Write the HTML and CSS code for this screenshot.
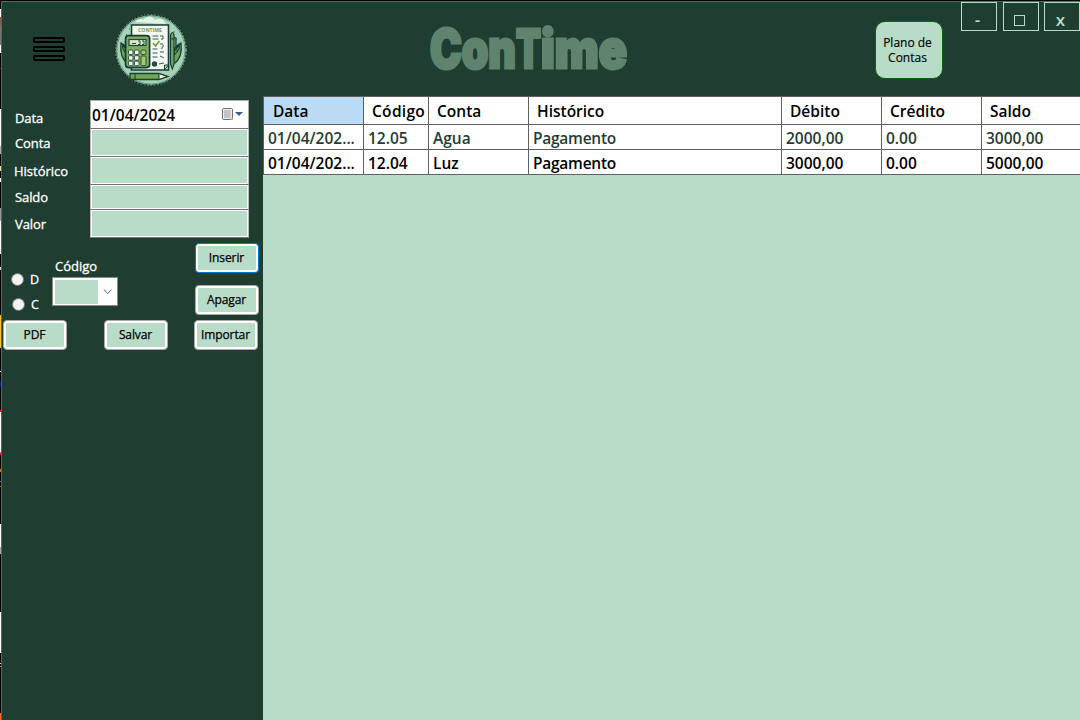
FILE: index.html
```html
<!DOCTYPE html>
<html lang="pt">
<head>
<meta charset="utf-8">
<title>ConTime</title>
<link rel="stylesheet" href="styles.css">
</head>
<body>
<div class="desktop">
<div class="window">
  <header class="topbar">
    <svg class="menu" width="34" height="26" viewBox="0 0 34 26" fill="none" stroke="#000" stroke-width="2">
      <rect x="2" y="2" width="30" height="4" rx="1"/><rect x="2" y="11" width="30" height="4" rx="1"/><rect x="2" y="20" width="30" height="4" rx="1"/>
    </svg>
    <svg class="logo" width="74" height="74" viewBox="0 0 74 74">
      <circle cx="37" cy="37" r="35.5" fill="#a6d3b7" stroke="#0b211e" stroke-width="1.4"/>
      <circle cx="37" cy="37" r="35.5" fill="none" stroke="#8daaa0" stroke-width=".8" stroke-dasharray="2 1.4"/>
      <circle cx="37" cy="37" r="34" fill="none" stroke="#5e8f78" stroke-width=".8"/>
      <path d="M21 9q4-5 8-2q7-7 12 0q7-4 11 4z" fill="#e3f3e8"/>
      <path d="M12 21l1 1M10 29h1M59 19h2M62 26h1M15 16h1" stroke="#45705d"/>
      <g fill="#6da05e" stroke="#193e35" stroke-width="1.2">
        <path d="M14 51Q5 44 7 30l7 8M14 42Q7 36 9 31l5 4zM60 51Q69 44 67 30l-7 8M60 42Q67 36 65 31l-5 4z"/>
      </g>
      <path d="M17.5 12h37v45h-37z" fill="#f5f8ef" stroke="#163d38" stroke-width="1.6"/>
      <path d="M50.500 57v-5h4z" fill="#bdd7c1" stroke="#163d38"/>
      <text x="24" y="18.8" class="logo-name" textLength="24" lengthAdjust="spacingAndGlyphs">CONTIME</text>
      <path d="M38.500 23h6m-6 3h6m-6 10h5m-5 4h5m-5 4h5" fill="none" stroke="#315b50" stroke-width="1.2"/>
      <path d="M46 23h3v3h-2m2 5h-3m0 8h4m-4 4 4 2m-5 6 5-1" fill="none" stroke="#315b50"/>
      <path d="M39 30l2.500 3 4-5m2 8 2-4" fill="none" stroke="#6a9b3d" stroke-width="1.6"/>
      <circle cx="40.5" cy="51" r="2.7" fill="#214c42"/>
      <rect x="11.6" y="22.600" width="24" height="32" rx="3" fill="#7dad62" stroke="#143a34" stroke-width="1.7"/>
      <rect x="15" y="26.500" width="17" height="6" fill="#d7e8cc" stroke="#20483d" stroke-width="1.2"/>
      <path d="M18 30.500h4m2-2.500h2v3.500h-2m4-3.500h2v3.500h-2" fill="none" stroke="#254c41"/>
      <g fill="#eff5e4" stroke="#24483e" stroke-width=".9">
        <rect x="14.500" y="37" width="4.500" height="4.500" rx="1"/><rect x="20.500" y="37" width="4.500" height="4.500" rx="1"/>
        <rect x="14.500" y="42.700" width="4.500" height="4.500" rx="1"/><rect x="20.500" y="42.700" width="4.500" height="4.500" rx="1"/>
        <rect x="14.500" y="48.200" width="4.500" height="4.500" rx="1"/><rect x="20.500" y="48.200" width="4.500" height="4.500" rx="1"/>
        <rect x="27" y="37" width="5" height="4.500" rx="1" fill="#a6c96f"/><rect x="27" y="43" width="5" height="9.500" rx="1" fill="#a6c96f"/>
      </g>
      <path d="M56.500 22q2-5 3.500 0v29l-1.700 5-1.800-5zM56.500 26H60M60 24l2 1v13" fill="#75a36a" stroke="#173f37" stroke-width="1.2"/>
      <path d="M16 60.500h29l9 3-9 3H16z" fill="#75a452" stroke="#173f37" stroke-width="1.3"/>
      <path d="M45 60.500l8 3-8 3zM21 60.500v6" fill="#f3eed8" stroke="#173f37"/>
    </svg>
    <svg class="brand" width="204" height="80" viewBox="0 0 204 80">
      <text y="56" class="brand-name"><tspan x="2" textLength="86" lengthAdjust="spacingAndGlyphs">Con</tspan><tspan x="88" textLength="25" lengthAdjust="spacingAndGlyphs">T</tspan><tspan x="113" textLength="86" lengthAdjust="spacingAndGlyphs">ime</tspan></text>
    </svg>
    <button class="plan">Plano de<br>Contas</button>
    <nav class="controls"><span class="control">-</span><span class="control"><i class="maximize"></i></span><span class="control">x</span></nav>
  </header>
  <div class="content">
    <aside class="sidebar">
      <div class="fields">
        <label class="label date-label">Data</label>
        <div class="date"><span>01/04/2024</span>
          <svg width="22" height="14" viewBox="0 0 22 14"><rect x=".5" y=".5" width="10" height="11" rx="1" fill="#eee" stroke="#756d6d"/><path d="M2 3h7M2 5h7M2 7h7M2 9h7M3 2v8M5 2v8M7 2v8" stroke="#a3a4b3" stroke-width=".7"/><path d="M8 12l3-3v3z" fill="#aaa"/><path d="M13 4h8L17 8z" fill="#415788"/></svg>
        </div>
        <label class="label lower">Conta</label><div class="input"></div>
        <label class="label lower historic">Histórico</label><div class="input"></div>
        <label class="label">Saldo</label><div class="input"></div>
        <label class="label">Valor</label><div class="input"></div>
      </div>
      <div class="entry">
        <div class="radios"><label class="option"><i class="dot"></i>D</label><label class="option second"><i class="dot"></i>C</label></div>
        <div class="code"><span class="code-label">Código</span><div class="combo"><i class="combo-value"></i><svg width="17" height="10" viewBox="0 0 17 10"><path d="M4 2.5l4 4 4-4" fill="none" stroke="#555"/></svg></div></div>
        <div class="actions"><button class="btn focused">Inserir</button><button class="btn">Apagar</button></div>
      </div>
      <div class="files"><button class="btn">PDF</button><button class="btn">Salvar</button><button class="btn">Importar</button></div>
    </aside>
    <main class="main">
      <div class="row head"><span class="cell selected">Data</span><span class="cell code-head">Código</span><span class="cell">Conta</span><span class="cell">Histórico</span><span class="cell">Débito</span><span class="cell">Crédito</span><span class="cell">Saldo</span></div>
      <div class="row active"><span class="cell">01/04/202...</span><span class="cell">12.05</span><span class="cell">Agua</span><span class="cell tight">Pagamento</span><span class="cell">2000,00</span><span class="cell">0.00</span><span class="cell">3000,00</span></div>
      <div class="row"><span class="cell">01/04/202...</span><span class="cell">12.04</span><span class="cell">Luz</span><span class="cell tight">Pagamento</span><span class="cell">3000,00</span><span class="cell">0.00</span><span class="cell">5000,00</span></div>
    </main>
  </div>
</div>
</div>
</body>
</html>
```
FILE: styles.css
```css
* { box-sizing: border-box; }
body { margin: 0; font-family: "Open Sans", "Noto Sans", sans-serif; color: #000; }
button { font: inherit; color: #000; padding: 0; margin: 0; }
.desktop { width: 1080px; height: 720px; overflow: hidden; padding: 1px 0 0 1px;
  background: linear-gradient(#000 9px, #fff 9px 17px, #865b45 17px 25px, #777870 25px 45px, #fff 45px 53px, #000 53px 68px, #900 68px 69px, #000 69px 109px, #fff 109px 146px, #aaa 146px 154px, #000 154px 166px, #ddeab0 166px 171px, #000 171px 178px, #fff 178px 182px, #000 182px 208px, #999 208px 221px, #fff 221px 254px, #000 254px 267px, #ddd 267px 270px, #000 270px 315px, #ffc32e 315px 348px, #000 348px 371px, #fff 371px 372px, #000 372px 381px, #001080 381px 387px, #000 387px 410px, #f00 410px 412px, #fff 412px 452px, #f00 453px 455px, #000 455px 469px, #dd7700 469px 472px, #000 472px 481px, #a60 481px 482px, #000 482px 486px, #a60 486px 487px, #000 487px 524px, #fff 524px 547px, #aaa 547px 554px, #000 554px 612px, #fff 612px 653px, #000 653px 663px, #ddd 663px 664px, #000 664px 666px, #d80 666px 667px, #000 667px 713px, #ff692b 713px) 0 0 / 1px 720px no-repeat #000; }
.window { height: 719px; border: solid #2e8052; border-width: 1px 0 0 1px; background: #1f3d30; display: flex; flex-direction: column; }
.topbar { height: 94px; flex: none; display: flex; align-items: flex-start; }
.menu { margin: 34px 0 0 30px; }
.logo { margin: 11px 0 0 48px; }
.logo-name { font: 700 6px "Open Sans", sans-serif; fill: #75965d; }
.brand { margin: 10px 0 0 240px; overflow: visible; }
.brand-name { font: 900 53px Inter, sans-serif; fill: #608370; stroke: #608370; stroke-width: 3px; }
.plan { width: 68px; height: 58px; margin: 19px 0 0 243px; border: 1px solid #0b640f; border-radius: 10px; background: #b9dcc8; font-size: 12px; line-height: 15px; padding: 0 3px 0 0; -webkit-text-stroke: .15px; }
.controls { display: flex; gap: 5px; margin-left: 18px; }
.control { width: 36px; height: 29px; border: 1px solid #b9dcc8; color: #b9dcc8; font-size: 17px; font-weight: 600; line-height: 34px; text-align: center; padding-right: 3px; }
.control:first-child { margin-right: 1px; }
.maximize { display: inline-block; width: 11px; height: 11px; border: 1px solid #b9dcc8; vertical-align: 0; }
.content { flex: 1; display: flex; min-height: 0; }
.sidebar { width: 261px; flex: none; padding-top: 4px; color: #fff; font-size: 13px; font-weight: 500; }
.fields { display: grid; grid-template-columns: 88px 159px; grid-template-rows: 28px 28px 28px 25px 29px; }
.label { align-self: center; padding-left: 13px; line-height: 18px; letter-spacing: -.1px; -webkit-text-stroke: .3px; }
.lower { padding-top: 2px; }
.historic { padding-left: 12px; letter-spacing: 0; }
.date-label { padding-top: 8px; }
.date { display: flex; align-items: center; justify-content: space-between; background: #fff; border: 1px solid #aaa; border-bottom: 0; color: #000; font-size: 15.5px; font-weight: 600; line-height: 28px; padding: 1px 4px 0 1px; }
.input { background: #b9dcc8; border-top: 1px solid #746e75; box-shadow: inset 0 0 0 1px #fff, inset 1px 0 #fff; border-left: 1px solid #bbb; border-right: 1px solid #bbb; }
.input:last-child { border-bottom: 1px solid #777; }
.entry { height: 82px; display: flex; padding: 5px 4px 0 9px; }
.radios { width: 41px; padding-top: 24px; }
.option { height: 25px; display: flex; align-items: center; gap: 6px; font-size: 12.5px; line-height: 17px; -webkit-text-stroke: .3px; }
.second { padding-left: 1px; }
.dot { width: 13px; height: 13px; border: 1px solid #777; border-radius: 50%; background: #f3f3f3; }
.code { width: 66px; padding-top: 14px; }
.code-label { display: block; padding-left: 3px; line-height: 18px; height: 20px; -webkit-text-stroke: .3px; }
.combo { height: 29px; border: 1px solid #888; background: #fff; display: flex; align-items: center; gap: 2px; padding: 1px 1px 1px 2px; }
.combo-value { width: 44px; height: 24px; background: #b9dcc8; }
.actions { margin-left: auto; display: flex; flex-direction: column; gap: 12px; }
.btn { width: 64px; height: 30px; border: 1px solid #aaa; border-radius: 4px; background: #b9dcc8; box-shadow: inset 0 0 0 2px #fff; font-size: 12px; font-weight: 500; letter-spacing: -.1px; line-height: 26px; white-space: nowrap; padding-right: 1px; -webkit-text-stroke: .25px; }
.focused { border-color: #0078d4; }
.files { display: flex; padding-left: 1px; }
.files .btn + .btn { margin-left: 37px; }
.files .btn:last-child { margin-left: 26px; }
.main { flex: 1; min-width: 0; background: #b9dcc8; overflow: hidden; font-size: 15.5px; font-weight: 600; }
.row { display: grid; grid-template-columns: 101px 65px 100px 253px 100px 100px 98px; height: 25px; background: #fff; border-bottom: 1px solid #606060; line-height: 27px; }
.head { height: 29px; border-top: 1px solid #606060; line-height: 29px; }
.cell { border-right: 1px solid #606060; padding-left: 4px; white-space: nowrap; overflow: hidden; height: 100%; }
.tight { letter-spacing: -.25px; }
.code-head { letter-spacing: .3px; }
.cell:first-child { border-left: 1px solid #606060; }
.cell:last-child { border-right: 0; }
.head .cell { padding-left: 8px; }
.head .selected { background: #bbdbf4; padding-left: 9px; }
.active { color: #1f3d32; }
```
